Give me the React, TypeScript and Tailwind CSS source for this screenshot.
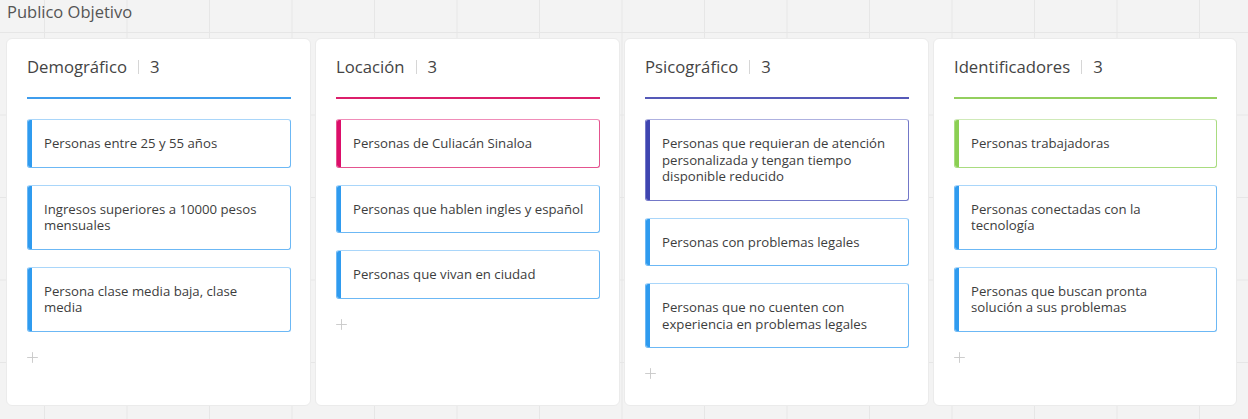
import { Plus } from 'lucide-react';

type Tone = 'blue' | 'pink' | 'indigo' | 'green';

const tones: Record<Tone, { bar: string; box: string }> = {
  blue: {
    bar: 'bg-[#2f9bef]',
    box: 'border-[#6cb8f5] border-t-[#a9d6fa]',
  },
  pink: {
    bar: 'bg-[#dc0e6a]',
    box: 'border-[#e4538f] border-t-[#f08cb8]',
  },
  indigo: {
    bar: 'bg-[#3f45b0]',
    box: 'border-[#7378c8] border-t-[#aeb1e0]',
  },
  green: {
    bar: 'bg-[#8bcf53]',
    box: 'border-[#a9dc80] border-t-[#cfeab8]',
  },
};

const columns: { title: string; line: string; items: { text: string; tone: Tone }[] }[] = [
  {
    title: 'Demográfico',
    line: 'border-[#3f9ded]',
    items: [
      { text: 'Personas entre 25 y 55 años', tone: 'blue' },
      { text: 'Ingresos superiores a 10000 pesos mensuales', tone: 'blue' },
      { text: 'Persona clase media baja, clase media', tone: 'blue' },
    ],
  },
  {
    title: 'Locación',
    line: 'border-[#dc1f6b]',
    items: [
      { text: 'Personas de Culiacán Sinaloa', tone: 'pink' },
      { text: 'Personas que hablen ingles y español', tone: 'blue' },
      { text: 'Personas que vivan en ciudad', tone: 'blue' },
    ],
  },
  {
    title: 'Psicográfico',
    line: 'border-[#5559b8]',
    items: [
      { text: 'Personas que requieran de atención personalizada y tengan tiempo disponible reducido', tone: 'indigo' },
      { text: 'Personas con problemas legales', tone: 'blue' },
      { text: 'Personas que no cuenten con experiencia en problemas legales', tone: 'blue' },
    ],
  },
  {
    title: 'Identificadores',
    line: 'border-[#93cf5e]',
    items: [
      { text: 'Personas trabajadoras', tone: 'green' },
      { text: 'Personas conectadas con la tecnología', tone: 'blue' },
      { text: 'Personas que buscan pronta solución a sus problemas', tone: 'blue' },
    ],
  },
];

export default function App() {
  return (
    <div
      className="w-[1248px] h-[419px] overflow-hidden bg-[#f3f3f3] bg-[linear-gradient(to_right,#e6e6e6_1px,transparent_1px),linear-gradient(to_bottom,#e6e6e6_1px,transparent_1px)] bg-[length:82.5px_82.5px] bg-[position:44px_32px] text-[#444]"
      style={{ fontFamily: '"Open Sans", sans-serif' }}
    >
      <div className="h-[38px] pl-[7px] text-[16.5px] leading-[24px] text-[#555]">Publico Objetivo</div>

      <div className="flex gap-[4px] px-[6px]">
        {columns.map((col, i) => (
          <section
            key={col.title}
            className={`${i === 3 ? 'w-[304px]' : 'w-[305px]'} h-[368px] bg-white rounded-md border border-[#ebebeb] pt-[16px] pl-[20px] pr-[19px]`}
          >
            <header className="flex items-center h-[24px] text-[16.7px] leading-[24px] text-[#444]">
              <span>{col.title}</span>
              <span className="mx-[11px] w-px h-[14px] bg-[#d6d6d6]" />
              <span>{col.items.length}</span>
            </header>
            <div className={`mt-[18px] border-b-2 ${col.line}`} />

            <div className="mt-[20px] flex flex-col gap-[17px]">
              {col.items.map((it) => (
                <div
                  key={it.text}
                  className={`flex rounded-[3px] border ${tones[it.tone].box} bg-white overflow-hidden`}
                >
                  <div className={`w-[4px] shrink-0 ${tones[it.tone].bar}`} />
                  <p className="py-[15px] pl-[12px] pr-[15.5px] text-[13.2px] leading-[16.5px] text-[#3d3d3d]">
                    {it.text}
                  </p>
                </div>
              ))}
            </div>

            <div className="mt-[17px] ml-[-3px] text-[#c8c8c8]">
              <Plus size={17} strokeWidth={1.3} />
            </div>
          </section>
        ))}
      </div>
    </div>
  );
}
